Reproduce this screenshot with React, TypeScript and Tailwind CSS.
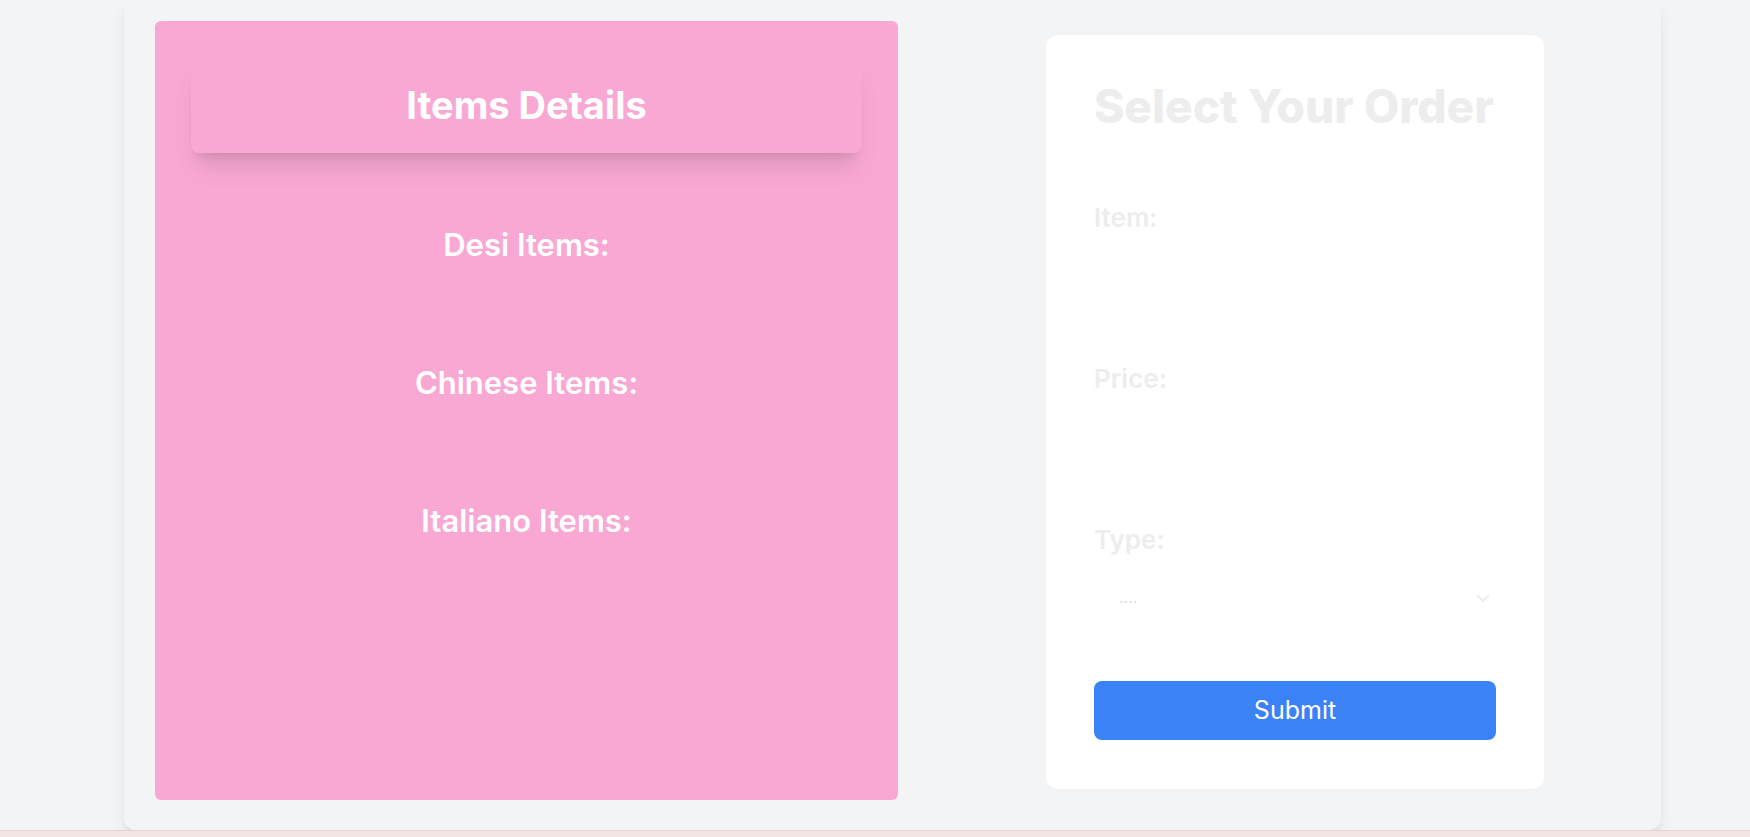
import React from "react";

const categories = ["Desi Items:", "Chinese Items:", "Italiano Items:"];

const labelCls = "block text-[26px] leading-8 font-semibold text-[#ededed]";

const Field = ({ label }: { label: string }) => (
  <div className="mb-[63px]">
    <label className={labelCls}>{label}</label>
    <input
      type="text"
      className="mt-4 block h-[50px] w-full bg-white outline-none"
    />
  </div>
);

const App: React.FC = () => {
  return (
    <div className="min-h-screen bg-gray-100 font-['Inter',sans-serif] overflow-hidden">
      <div className="ml-[124px] flex h-[830px] w-[1537px] items-start rounded-b-xl bg-gray-100 px-[31px] pt-[21px] shadow-lg">
        {/* left pink panel */}
        <section className="h-[779px] w-[743px] shrink-0 rounded-md bg-[#f9a8d4] px-9 pt-9">
          <div className="flex h-[96px] items-center justify-center rounded-lg bg-[#f9a8d4] shadow-xl">
            <h2 className="text-[38px] font-bold text-white">Items Details</h2>
          </div>

          <div className="mt-[74px] flex flex-col items-center gap-[102px]">
            {categories.map((c) => (
              <h3 key={c} className="text-[31px] leading-9 font-semibold text-white">
                {c}
              </h3>
            ))}
          </div>
        </section>

        {/* order form */}
        <form className="ml-[148px] mt-[14px] flex w-[498px] shrink-0 flex-col rounded-xl bg-white px-12 pt-12 pb-[49px]">
          <h1 className="mb-[73px] whitespace-nowrap text-[46px] leading-none font-extrabold text-[#ededed]">
            Select Your Order
          </h1>

          <Field label="Item:" />
          <Field label="Price:" />

          <div>
            <label className={labelCls}>Type:</label>
            <div className="relative mt-4 h-[50px]">
              <select className="h-full w-full appearance-none bg-white pl-[25px] text-base text-[#e0e0e0] outline-none">
                <option>....</option>
                <option>Desi</option>
                <option>Chinese</option>
                <option>Italiano</option>
              </select>
              <svg
                className="pointer-events-none absolute right-[6px] top-[22px]"
                width="14"
                height="8"
                viewBox="0 0 14 8"
                fill="none"
              >
                <path d="M1 1l6 6 6-6" stroke="#e8e8e8" strokeWidth="1.5" />
              </svg>
            </div>
          </div>

          <button
            type="button"
            className="mt-[59px] h-[59px] w-full shrink-0 rounded-lg bg-[#3b82f6] text-[25px] text-white"
          >
            Submit
          </button>
        </form>
      </div>
      <div className="h-[7px] border-t border-[#e4d5d3] bg-[#f2e4e2]" />
    </div>
  );
};

export default App;
